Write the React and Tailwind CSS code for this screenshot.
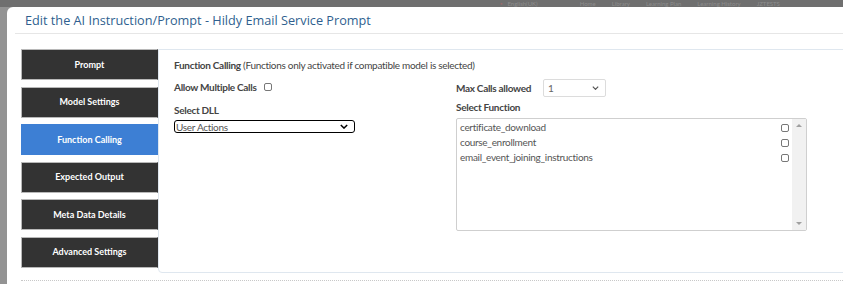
import { useState } from "react";

const tabs = [
  "Prompt",
  "Model Settings",
  "Function Calling",
  "Expected Output",
  "Meta Data Details",
  "Advanced Settings",
];

const functions = [
  "certificate_download",
  "course_enrollment",
  "email_event_joining_instructions",
];

const Chevron = ({ className = "" }) => (
  <svg viewBox="0 0 10 6" className={className} fill="none" stroke="currentColor" strokeWidth="1.8">
    <path d="M1 1l4 4 4-4" />
  </svg>
);

const Box = ({ className = "" }) => (
  <span className={`inline-block w-[8px] h-[8px] rounded-[2px] border border-[#777] bg-white ${className}`} />
);

export default function App() {
  const [active] = useState("Function Calling");

  return (
    <div
      className="w-[843px] h-[284px] overflow-hidden bg-[#939393] text-[#444]"
      style={{ fontFamily: "Lato, sans-serif" }}
    >
      {/* dimmed top nav */}
      <div className="w-[843px] h-[7px] bg-[#6f6f6f] overflow-hidden flex items-center text-[6px] leading-[6px] text-[#8d8d8d] pl-[500px] gap-[16px]">
        <span className="flex gap-[5px]"><span className="text-[#9a6a6a]">▪</span>English(UK)</span>
        <span className="ml-[26px]">Home</span>
        <span>Library</span>
        <span>Learning Plan</span>
        <span>Learning History</span>
        <span>JZTESTS</span>
      </div>

      {/* modal */}
      <div className="ml-[7px] w-[880px] h-[300px] bg-white rounded-tl-[6px] flex flex-col">
        <div className="mx-[8px] h-[27px] border-b border-[#e6e6e6] flex items-center pl-[10px] pt-[1px]">
          <h1
            className="text-[12.7px] text-[#2f5f8f] leading-none"
            style={{ fontFamily: "'Open Sans', sans-serif" }}
          >
            Edit the AI Instruction/Prompt - Hildy Email Service Prompt
          </h1>
        </div>

        <div className="flex pl-[14px] pt-[15px]">
          {/* tabs */}
          <div className="w-[137px] flex flex-col gap-[6.5px]">
            {tabs.map((t) => (
              <div
                key={t}
                className={`h-[31px] flex items-center justify-center text-[9px] font-bold text-white border ${
                  t === active
                    ? "bg-[#3d7fd4] border-[#3d7fd4]"
                    : "bg-[#333333] border-[#b8b8b8] border-r-[#333333]"
                }`}
              >
                {t}
              </div>
            ))}
          </div>

          {/* content */}
          <div className="flex-1 h-[224px] border border-[#dfe7ef] rounded-bl-[4px] pl-[15px] pt-[9px] text-[10px] tracking-[-0.3px]">
            <p className="leading-[13px]">
              <span className="font-bold">Function Calling</span> (Functions only activated if compatible model is selected)
            </p>

            <div className="flex mt-[6px]">
              <div className="w-[282px]">
                <div className="flex items-center h-[14px] mt-[2px]">
                  <span className="font-bold">Allow Multiple Calls</span>
                  <Box className="ml-[7px]" />
                </div>
                <div className="font-bold mt-[10px] leading-[13px]">Select DLL</div>
                <div className="mt-[3px] w-[181px] h-[13px] border-[1.5px] border-black rounded-[3px] flex items-center justify-between pl-[1px] pr-[6px] text-[#555]">
                  <span className="leading-none">User Actions</span>
                  <Chevron className="w-[8px] h-[5px] text-black" />
                </div>
              </div>

              <div>
                <div className="flex items-center h-[18px] mt-[1px]">
                  <span className="font-bold w-[87px]">Max Calls allowed</span>
                  <div className="w-[63px] h-[18px] border border-[#dcdcdc] rounded-[2px] flex items-center justify-between pl-[4px] pr-[6px] text-[#666]">
                    <span>1</span>
                    <Chevron className="w-[7px] h-[4px] text-[#555]" />
                  </div>
                </div>
                <div className="font-bold mt-[4px] leading-[13px]">Select Function</div>
                <div className="mt-[4px] w-[351px] h-[113px] border border-[#cfcfcf] rounded-[2px] flex">
                  <div className="flex-1 pl-[3px] pt-[1px] pr-[3px] text-[#555]">
                    {functions.map((f) => (
                      <div key={f} className="flex items-center justify-between h-[15px]">
                        <span>{f}</span>
                        <Box />
                      </div>
                    ))}
                  </div>
                  <div className="w-[14px] bg-[#f1f1f1] flex flex-col items-center justify-between py-[5px]">
                    <span className="w-0 h-0 border-x-[3px] border-x-transparent border-b-[3px] border-b-[#a0a0a0]" />
                    <span className="w-0 h-0 border-x-[3px] border-x-transparent border-t-[3px] border-t-[#a0a0a0]" />
                  </div>
                </div>
              </div>
            </div>
          </div>
        </div>

        <div className="ml-[14px] mt-[7px] border-t border-dotted border-[#c8c8c8]" />
      </div>
    </div>
  );
}
